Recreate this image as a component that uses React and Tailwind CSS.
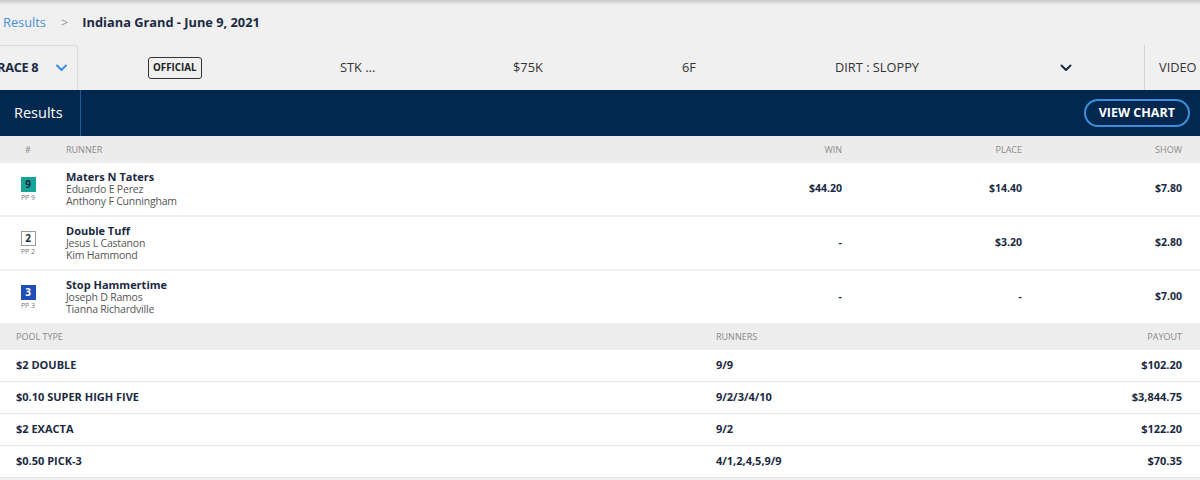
import React from 'react';

const runners = [
  { num: '9', pp: 'PP 9', badge: 'bg-[#17a398] text-[#0f2a3a] border-[#17a398]', name: 'Maters N Taters', jockey: 'Eduardo E Perez', trainer: 'Anthony F Cunningham', win: '$44.20', place: '$14.40', show: '$7.80' },
  { num: '2', pp: 'PP 2', badge: 'bg-white text-[#1d2b40] border-[#9a9a9a]', name: 'Double Tuff', jockey: 'Jesus L Castanon', trainer: 'Kim Hammond', win: '-', place: '$3.20', show: '$2.80' },
  { num: '3', pp: 'PP 3', badge: 'bg-[#1f4fb4] text-white border-[#1f4fb4]', name: 'Stop Hammertime', jockey: 'Joseph D Ramos', trainer: 'Tianna Richardville', win: '-', place: '-', show: '$7.00' },
];

const pools = [
  { type: '$2 DOUBLE', runners: '9/9', payout: '$102.20' },
  { type: '$0.10 SUPER HIGH FIVE', runners: '9/2/3/4/10', payout: '$3,844.75' },
  { type: '$2 EXACTA', runners: '9/2', payout: '$122.20' },
  { type: '$0.50 PICK-3', runners: '4/1,2,4,5,9/9', payout: '$70.35' },
];

function Chevron({ className }) {
  return (
    <svg viewBox="0 0 12 8" className={className} fill="none" stroke="currentColor" strokeWidth="2" strokeLinecap="round" strokeLinejoin="round">
      <path d="M1.5 1.5 6 6l4.5-4.5" />
    </svg>
  );
}

export default function App() {
  return (
    <div className="w-[1200px] h-[480px] overflow-hidden bg-[#f0f0f0] text-[#1b2a42] font-['Open_Sans',sans-serif]">
      <div className="h-[5px] bg-gradient-to-b from-[#c9c9c9] to-[#f0f0f0]" />

      {/* breadcrumb */}
      <div className="h-[40px] flex items-center pl-[3px] pb-[4px] text-[12.8px]">
        <span className="text-[#4a8fd6]">Results</span>
        <span className="text-[#9a9a9a] ml-[15px] mr-[14px] text-[13px]">&gt;</span>
        <span className="font-bold text-[#1b2a42]">Indiana Grand - June 9, 2021</span>
      </div>

      {/* race info bar */}
      <div className="h-[45px] flex items-center text-[12.8px] text-[#333]">
        <div className="w-[78px] h-full flex items-center border-t border-r border-[#dcdcdc] rounded-tr-[3px]">
          <span className="font-bold text-[#1b2a42] -ml-[3px] tracking-tight">RACE 8</span>
          <Chevron className="w-[13px] h-[8px] ml-[17px] text-[#3b8de0]" />
        </div>
        <div className="w-[70px]" />
        <div className="w-[192px]">
          <span className="inline-block border border-[#333] rounded-[3px] px-[4px] py-[2px] text-[9.8px] font-bold text-[#222] leading-[16px]">OFFICIAL</span>
        </div>
        <div className="w-[173px]">STK ...</div>
        <div className="w-[169px]">$75K</div>
        <div className="w-[153px]">6F</div>
        <div className="w-[225px]">DIRT : SLOPPY</div>
        <div className="w-[84px] flex">
          <Chevron className="w-[12px] h-[8px] text-[#1b2a42]" />
        </div>
        <div className="h-full flex items-center border-l border-[#d4d4d4] pl-[14px]">VIDEO</div>
      </div>

      {/* navy header */}
      <div className="h-[46px] bg-[#03284f] flex items-center">
        <div className="w-[81px] h-full flex items-center pl-[14px] text-white text-[14.5px] border-r border-[#1e5a96]">Results</div>
        <div className="flex-1" />
        <button className="mr-[10px] h-[28px] px-[13px] rounded-full border-2 border-[#3b8fdb] text-white text-[12.5px] font-bold">VIEW CHART</button>
      </div>

      {/* runners table */}
      <div className="grid grid-cols-[56px_1fr_180px_180px_160px] pr-[18px] h-[27px] items-center bg-[#ececec] text-[9px] text-[#8a8a8a] uppercase">
        <div className="text-center">#</div>
        <div className="pl-[10px]">Runner</div>
        <div className="text-right">Win</div>
        <div className="text-right">Place</div>
        <div className="text-right">Show</div>
      </div>
      <div className="bg-white">
        {runners.map((r, i) => (
          <div key={r.num} className={`grid grid-cols-[56px_1fr_180px_180px_160px] pr-[18px] items-center ${i > 0 ? 'h-[54px] border-t-2 border-[#efefef]' : 'h-[52px]'}`}>
            <div className="flex flex-col items-center">
              <div className={`w-[15px] h-[15px] border flex items-center justify-center text-[10px] font-bold ${r.badge}`}>{r.num}</div>
              <div className="text-[7px] text-[#777] mt-[2px] leading-none">{r.pp}</div>
            </div>
            <div className="pl-[10px]">
              <div className="text-[11px] font-bold leading-[12px]">{r.name}</div>
              <div className="text-[10.5px] text-[#555] leading-[12px] tracking-[-0.2px]">{r.jockey}</div>
              <div className="text-[10.5px] text-[#555] leading-[12px] tracking-[-0.2px]">{r.trainer}</div>
            </div>
            <div className="text-right text-[10.5px] font-bold">{r.win}</div>
            <div className="text-right text-[10.5px] font-bold">{r.place}</div>
            <div className="text-right text-[10.5px] font-bold">{r.show}</div>
          </div>
        ))}
      </div>

      {/* pool table */}
      <div className="grid grid-cols-[716px_1fr_200px] pr-[18px] h-[27px] items-center bg-[#ededed] text-[9px] text-[#8a8a8a] uppercase">
        <div className="pl-[16px]">Pool Type</div>
        <div>Runners</div>
        <div className="text-right">Payout</div>
      </div>
      <div className="bg-white">
        {pools.map((p, i) => (
          <div key={p.type} className={`grid grid-cols-[716px_1fr_200px] pr-[18px] items-center text-[11px] font-bold ${i > 0 ? 'h-[32px] border-t border-[#e6e6e6]' : 'h-[31px]'}`}>
            <div className="pl-[16px]">{p.type}</div>
            <div>{p.runners}</div>
            <div className="text-right">{p.payout}</div>
          </div>
        ))}
        <div className="border-t border-[#e6e6e6]" />
      </div>
    </div>
  );
}
